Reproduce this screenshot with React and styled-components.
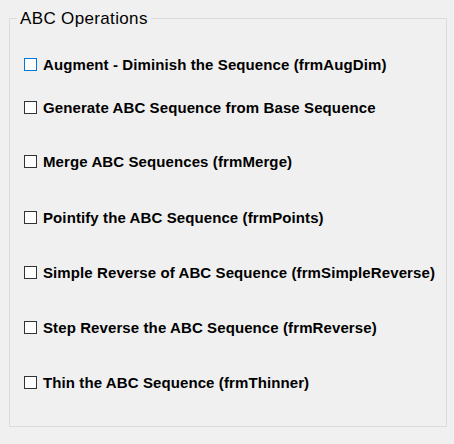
import styled, { createGlobalStyle } from 'styled-components';

const GlobalStyle = createGlobalStyle`
    html, body {
        margin: 0;
        background: #f0f0f0;
    }
`;

const Page = styled.div`
    width: 454px;
    height: 444px;
    padding: 18px 0 0 9px;
    box-sizing: border-box;
    background: #f0f0f0;
    font-family: "Liberation Sans", Arial, sans-serif;
`;

const GroupBox = styled.div`
    position: relative;
    width: 438px;
    height: 409px;
    box-sizing: border-box;
    border: 1px solid #dcdcdc;
    padding: 35px 0 0 14px;
`;

const Title = styled.span`
    position: absolute;
    top: -10px;
    left: 7px;
    padding: 0 3px;
    background: #f0f0f0;
    font-size: 17px;
    letter-spacing: 0.35px;
    line-height: 20px;
    color: #000;
`;

const List = styled.div`
    display: flex;
    flex-direction: column;
`;

const Row = styled.label`
    display: flex;
    align-items: center;
    height: 20px;
    gap: 6px;
    margin-bottom: ${(p) => p.$space}px;
    font-size: 15px;
    font-weight: bold;
    letter-spacing: 0.1px;
    color: #000;
    white-space: nowrap;
`;

const Box = styled.span`
    width: 13px;
    height: 13px;
    box-sizing: border-box;
    border: 1px solid ${(p) => (p.$focused ? '#0078d7' : '#333333')};
    background: #fff;
    flex: none;
`;

const items = [
    { text: 'Augment - Diminish the Sequence (frmAugDim)', space: 23 },
    { text: 'Generate ABC Sequence from Base Sequence', space: 34 },
    { text: 'Merge ABC Sequences (frmMerge)', space: 36 },
    { text: 'Pointify the ABC Sequence (frmPoints)', space: 35 },
    { text: 'Simple Reverse of ABC Sequence (frmSimpleReverse)', space: 35 },
    { text: 'Step Reverse the ABC Sequence (frmReverse)', space: 35 },
    { text: 'Thin the ABC Sequence (frmThinner)', space: 0 },
];

function App() {
    return (
        <Page>
            <GlobalStyle />
            <GroupBox>
                <Title>ABC Operations</Title>
                <List>
                    {items.map((item, index) => (
                        <Row key={index} $space={item.space}>
                            <Box $focused={index === 0} />
                            {item.text}
                        </Row>
                    ))}
                </List>
            </GroupBox>
        </Page>
    );
}

export default App;
